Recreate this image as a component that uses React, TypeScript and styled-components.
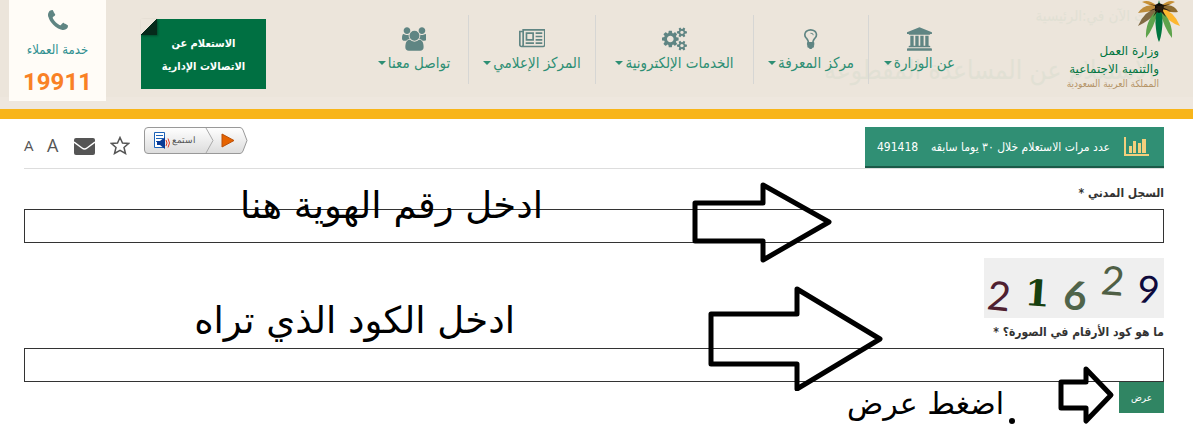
import React from 'react';
import styled, { createGlobalStyle } from 'styled-components';

const GlobalStyle = createGlobalStyle`
  * { box-sizing: border-box; }
  body {
    margin: 0;
    background: #fff;
    font-family: 'DejaVu Sans Condensed', 'DejaVu Sans', sans-serif;
    color: #333;
  }
`;

const Page = styled.div`
  direction: rtl;
  overflow: hidden;
`;

const Header = styled.header`
  position: relative;
  display: flex;
  align-items: flex-start;
  height: 119px;
  padding: 0 28px 0 9px;
  background: linear-gradient(#ece5db 97px, #eee7de 97px);
  border-bottom: 10px solid #f8b51a;
`;

const Ghost = styled.span<{ $top: number; $right: number; $size: number }>`
  position: absolute;
  top: ${(p) => p.$top}px;
  right: ${(p) => p.$right}px;
  font-size: ${(p) => p.$size}px;
  line-height: 32px;
  color: #e1e0d4;
  white-space: nowrap;
`;

const Brand = styled.a`
  position: relative;
  display: flex;
  flex-direction: column;
  width: 195px;
  padding: 42px 6px 0 0;
  color: #00753f;
  text-decoration: none;
  white-space: nowrap;
`;

const BrandName = styled.span`
  font-family: 'DejaVu Sans', sans-serif;
  font-size: 12px;
  line-height: 18px;
`;

const BrandCountry = styled.span`
  font-size: 10px;
  line-height: 12px;
  color: #b59468;
`;

const Palm = styled.svg`
  position: absolute;
  top: 0;
  right: -16px;
  width: 44px;
  height: 43px;
`;

const Nav = styled.nav`
  position: relative;
  display: flex;
  padding-top: 15px;
`;

const NavItem = styled.a<{ $width: number }>`
  display: flex;
  flex-direction: column;
  align-items: center;
  width: ${(p) => p.$width}px;
  height: 69px;
  padding-top: 10px;
  color: #2e8f74;
  font-size: 15px;
  line-height: 20px;
  text-decoration: none;
  white-space: nowrap;
  & + & { border-right: 1px solid #d6d6d4; }
`;

const NavIcon = styled.svg`
  height: 28px;
  fill: #5f8583;
`;

const NavLabel = styled.span`
  display: flex;
  align-items: center;
  gap: 2px;
`;

const Caret = styled.i`
  border: 4px solid transparent;
  border-top-color: #2e8f74;
  border-bottom: 0;
`;

const HeaderEnd = styled.div`
  display: flex;
  gap: 35px;
  margin-right: auto;
`;

const Inquiry = styled.a`
  position: relative;
  width: 125px;
  height: 70px;
  margin-top: 19px;
  padding-top: 13px;
  background: #007042;
  color: #fff;
  font-size: 11px;
  font-weight: 700;
  line-height: 23px;
  text-align: center;
  text-decoration: none;
  &::before {
    content: '';
    position: absolute;
    top: 0;
    left: 0;
    width: 16px;
    height: 16px;
    background: linear-gradient(135deg, #ece5db 50%, #062a1b 50%);
    box-shadow: 1px 1px 2px #0005;
  }
`;

const Support = styled.a`
  display: flex;
  flex-direction: column;
  align-items: center;
  gap: 10px;
  width: 97px;
  height: 101px;
  padding-top: 10px;
  background: #fffcf7;
  color: #2e8f90;
  font-size: 13px;
  line-height: 20px;
  text-decoration: none;
`;

const SupportNumber = styled.strong`
  color: #f98125;
  font-family: Roboto, sans-serif;
  font-size: 24px;
  line-height: 24px;
`;

const Main = styled.main`
  padding: 0 29px 0 24px;
`;

const Toolbar = styled.div`
  display: flex;
  justify-content: space-between;
  height: 50px;
  padding-top: 8px;
  border-bottom: 1px solid #ddd;
`;

const Stats = styled.div`
  display: flex;
  align-items: center;
  width: 299px;
  height: 41px;
  padding: 0 15px 0 12px;
  background: #308f74;
  border-bottom: 2px solid #1b5a48;
  color: #fff;
  font-size: 12px;
  white-space: nowrap;
`;

const StatsText = styled.span`
  margin-right: 14px;
`;

const StatsValue = styled.span`
  margin-right: auto;
`;

const Tools = styled.div`
  display: flex;
  direction: ltr;
  align-items: flex-start;
`;

const Tool = styled.button<{ $width: number; $size?: number }>`
  display: flex;
  align-items: flex-end;
  width: ${(p) => p.$width}px;
  height: 28px;
  padding: 0;
  border: 0;
  background: none;
  color: #555;
  font-family: 'Open Sans', sans-serif;
  font-size: ${(p) => p.$size ?? 16}px;
  line-height: 20px;
`;

const Listen = styled.button`
  width: 104px;
  height: 27px;
  padding: 0;
  border: 0;
  background: none;
`;

const Form = styled.form`
  display: flex;
  flex-direction: column;
  align-items: flex-start;
`;

const Field = styled.div<{ $gap: number }>`
  position: relative;
  width: 100%;
  padding-top: ${(p) => p.$gap}px;
`;

const Label = styled.label`
  display: block;
  height: 26px;
  font-size: 12px;
  font-weight: 700;
  line-height: 20px;
`;

const Input = styled.input`
  display: block;
  width: 100%;
  height: 34px;
  padding: 0 12px;
  border: 1px solid #333;
  border-radius: 0;
  background: #fff;
  font-size: 14px;
`;

const Captcha = styled.svg`
  display: block;
  width: 180px;
  height: 60px;
  margin-bottom: 4px;
  background: #efefef;
`;

const Submit = styled.button`
  width: 45px;
  height: 31px;
  padding: 0;
  border: 0;
  background: #308563;
  color: #fff;
  font-family: inherit;
  font-size: 10px;
`;

const Actions = styled.div`
  position: relative;
  width: 100%;
  height: 44px;
`;

const Note = styled.span<{ $top: number; $right: number; $size: number }>`
  position: absolute;
  top: ${(p) => p.$top}px;
  right: ${(p) => p.$right}px;
  color: #000;
  font-family: 'DejaVu Sans', sans-serif;
  font-size: ${(p) => p.$size}px;
  line-height: 48px;
  white-space: nowrap;
  pointer-events: none;
`;

const Dot = styled.i`
  position: absolute;
  top: 36px;
  right: 149px;
  width: 6px;
  height: 6px;
  border-radius: 50%;
  background: #000;
`;

const Arrow = styled.svg<{ $top: number; $right: number }>`
  position: absolute;
  top: ${(p) => p.$top}px;
  right: ${(p) => p.$right}px;
  fill: none;
  stroke: #000;
  stroke-width: 5;
  stroke-linejoin: round;
  pointer-events: none;
`;

const navItems = [
  {
    label: 'عن الوزارة', width: 101, box: 1920,
    path: 'M960 0l960 384v128h-128q0 26-20.5 45t-48.5 19h-1526q-28 0-48.5-19t-20.5-45h-128v-128zm-704 640h256v768h128v-768h256v768h128v-768h256v768h128v-768h256v768h59q28 0 48.5 19t20.5 45v64h-1664v-64q0-26 20.5-45t48.5-19h59v-768zm1595 960q28 0 48.5 19t20.5 45v128h-1920v-128q0-26 20.5-45t48.5-19h1782z',
  },
  {
    label: 'مركز المعرفة', width: 115, box: 1024,
    path: 'M736 576q0 13-9.5 22.5t-22.5 9.5-22.5-9.5-9.5-22.5q0-46-54-71t-106-25q-13 0-22.5-9.5t-9.5-22.5 9.5-22.5 22.5-9.5q50 0 99.5 16t87 54 37.5 90zm160 0q0-72-34.5-134t-90-101.5-123-62-136.5-22.5-136.5 22.5-123 62-90 101.5-34.5 134q0 101 68 180 10 11 30.5 33t30.5 33q128 153 141 298h228q13-145 141-298 10-11 30.5-33t30.5-33q68-79 68-180zm128 0q0 155-103 268-45 49-74.5 87t-59.5 95.5-34 107.5q47 28 47 82 0 37-25 64 25 27 25 64 0 52-45 81 13 23 13 47 0 46-31.5 71t-77.5 25q-20 44-60 70t-87 26-87-26-60-70q-46 0-77.5-25t-31.5-71q0-24 13-47-45-29-45-81 0-37 25-64-25-27-25-64 0-54 47-82-4-50-34-107.5t-59.5-95.5-74.5-87q-103-113-103-268 0-99 44.5-184.5t117-142 164-89 186.5-32.5 186.5 32.5 164 89 117 142 44.5 184.5z',
  },
  {
    label: 'الخدمات الإلكترونية', width: 158, box: 1920,
    path: 'M896 896q0-106-75-181t-181-75-181 75-75 181 75 181 181 75 181-75 75-181zm768 512q0-52-38-90t-90-38-90 38-38 90q0 53 37.5 90.5t90.5 37.5 90.5-37.5 37.5-90.5zm0-1024q0-52-38-90t-90-38-90 38-38 90q0 53 37.5 90.5t90.5 37.5 90.5-37.5 37.5-90.5zm-384 421v185q0 10-7 19.5t-16 10.5l-155 24q-11 35-32 76 34 48 90 115 7 11 7 20 0 12-7 19-23 30-82.5 89.5t-78.5 59.5q-11 0-21-7l-115-90q-37 19-77 31-11 108-23 155-7 24-30 24h-186q-11 0-20-7.5t-10-17.5l-23-153q-34-10-75-31l-118 89q-7 7-20 7-11 0-21-8-144-133-144-160 0-9 7-19 10-14 41-53t47-61q-23-44-35-82l-152-24q-10-1-17-9.5t-7-19.5v-185q0-10 7-19.5t16-10.5l155-24q11-35 32-76-34-48-90-115-7-11-7-20 0-12 7-20 22-30 82-89t79-59q11 0 21 7l115 90q34-18 77-32 11-108 23-154 7-24 30-24h186q11 0 20 7.5t10 17.5l23 153q34 10 75 31l118-89q8-7 20-7 11 0 21 8 144 133 144 160 0 8-7 19-12 16-42 54t-45 60q23 48 34 82l152 23q10 2 17 10.5t7 19.5zm640 533v140q0 16-149 31-12 27-30 52 51 113 51 138 0 4-4 7-122 71-124 71-8 0-46-47t-52-68q-20 2-30 2t-30-2q-14 21-52 68t-46 47q-2 0-124-71-4-3-4-7 0-25 51-138-18-25-30-52-149-15-149-31v-140q0-16 149-31 13-29 30-52-51-113-51-138 0-4 4-7 4-2 35-20t59-34 30-16q8 0 46 46.5t52 67.5q20-2 30-2t30 2q51-71 92-112l6-2q4 0 124 70 4 3 4 7 0 25-51 138 17 23 30 52 149 15 149 31zm0-1024v140q0 16-149 31-12 27-30 52 51 113 51 138 0 4-4 7-122 71-124 71-8 0-46-47t-52-68q-20 2-30 2t-30-2q-14 21-52 68t-46 47q-2 0-124-71-4-3-4-7 0-25 51-138-18-25-30-52-149-15-149-31v-140q0-16 149-31 13-29 30-52-51-113-51-138 0-4 4-7 4-2 35-20t59-34 30-16q8 0 46 46.5t52 67.5q20-2 30-2t30 2q51-71 92-112l6-2q4 0 124 70 4 3 4 7 0 25-51 138 17 23 30 52 149 15 149 31z',
  },
  {
    label: 'المركز الإعلامي', width: 127, box: 2048,
    path: 'M1024 512h-384v384h384v-384zm128 640v128h-640v-128h640zm0-768v640h-640v-640h640zm640 768v128h-512v-128h512zm0-256v128h-512v-128h512zm0-256v128h-512v-128h512zm0-256v128h-512v-128h512zm-1536 960v-960h-128v960q0 26 19 45t45 19 45-19 19-45zm1664 0v-1088h-1536v1088q0 33-11 64h1483q26 0 45-19t19-45zm128-1216v1216q0 80-56 136t-136 56h-1664q-80 0-136-56t-56-136v-1088h256v-128h1792z',
  },
  {
    label: 'تواصل معنا', width: 109, box: 1920,
    path: 'M593 896q-162 5-265 128h-134q-82 0-138-40.5t-56-118.5q0-353 124-353 6 0 43.5 21t97.5 42.5 119 21.5q67 0 133-23-5 37-5 66 0 139 81 256zm1071 637q0 120-73 189.5t-194 69.5h-874q-121 0-194-69.5t-73-189.5q0-53 3.5-103.5t14-109 26.5-108.5 43-97.5 62-81 85.5-53.5 111.5-20q10 0 43 21.5t73 48 107 48 135 21.5 135-21.5 107-48 73-48 43-21.5q61 0 111.5 20t85.5 53.5 62 81 43 97.5 26.5 108.5 14 109 3.5 103.5zm-1024-1277q0 106-75 181t-181 75-181-75-75-181 75-181 181-75 181 75 75 181zm704 384q0 159-112.5 271.5t-271.5 112.5-271.5-112.5-112.5-271.5 112.5-271.5 271.5-112.5 271.5 112.5 112.5 271.5zm576 225q0 78-56 118.5t-138 40.5h-134q-103-123-265-128 81-117 81-256 0-29-5-66 66 23 133 23 59 0 119-21.5t97.5-42.5 43.5-21q124 0 124 353zm-128-609q0 106-75 181t-181 75-181-75-75-181 75-181 181-75 181 75 75 181z',
  },
];

const phonePath =
  'M1408 1240q0 27-10 70.5t-21 68.5q-21 50-122 106-94 51-186 51-27 0-53-3.5t-57.5-12.5-47-14.5-55.5-20.5-49-18q-98-35-175-83-127-79-264-216t-216-264q-48-77-83-175-3-9-18-49t-20.5-55.5-14.5-47-12.5-57.5-3.5-53q0-92 51-186 56-101 106-122 25-11 68.5-21t70.5-10q14 0 21 3 18 6 53 76 11 19 30 54t35 63.5 31 53.5q3 4 17.5 25t21.5 35.5 7 28.5q0 20-28.5 50t-62 55-62 53-28.5 46q0 9 5 22.5t8.5 20.5 14 24 11.5 19q76 137 174 235t235 174q2 1 19 11.5t24 14 20.5 8.5 22.5 5q18 0 46-28.5t53-62 55-62 50-28.5q14 0 28.5 7t35.5 21.5 25 17.5q25 15 53.5 31t63.5 35 54 30q70 35 76 53 3 7 3 21z';

const digits = [
  { char: '2', x: 2, y: 51, turn: 6, size: 40, fill: '#4f2030', font: 'Lato', weight: 400 },
  { char: '1', x: 40, y: 47, turn: 4, size: 36, fill: '#17400f', font: 'DejaVu Serif', weight: 700 },
  { char: '6', x: 78, y: 50, turn: 8, size: 40, fill: '#50644a', font: 'Lato', weight: 700 },
  { char: '2', x: 116, y: 36, turn: 5, size: 40, fill: '#4f5f45', font: 'Lato', weight: 400 },
  { char: '9', x: 152, y: 44, turn: 6, size: 38, fill: '#0e0a3c', font: 'Lato', weight: 400 },
];

export default function App() {
  return (
    <Page lang="ar">
      <GlobalStyle />
      <Header>
        <Ghost $top={0} $right={38} $size={15}>أنت الآن في:الرئيسية</Ghost>
        <Ghost $top={54} $right={38} $size={26}>الاستعلام عن المساعدة المقطوعة</Ghost>
        <Brand href="#home">
          <Palm viewBox="0 0 44 43">
            <path d="M20 6Q12-1 5 2Q11 4 20 9Z M24 6Q32-1 38 2Q33 4 24 9Z" fill="#c69035" />
            <path d="M20 7Q8 2 1 13Q10 12 21 10Z" fill="#bd8c3b" />
            <path d="M24 7Q36 2 41 12Q33 13 23 10Z" fill="#8f6d32" />
            <path d="M20 8Q7 11 1 26Q12 21 21 11Z" fill="#816a43" />
            <path d="M24 8Q37 11 43 26Q31 22 23 11Z" fill="#fdb72f" />
            <path d="M20 10Q8 21 9 38Q17 28 21 11Z M24 10Q36 21 35 38Q27 28 23 11Z" fill="#5ea34c" />
            <path d="M22 0Q17 18 19 29Q20 38 22 42Q24 38 25 29Q27 18 22 0Z" fill="#00753f" />
            <path d="M18 5L22 3L27 5L26 11L22 13L18 11Z" fill="#0b0c08" />
            <path d="M12 4L21 7L12 11L20 9L16 17L22 10L29 17L25 9L34 11L25 7L34 4L22 6Z" fill="#271a0c" />
          </Palm>
          <BrandName>وزارة العمل</BrandName>
          <BrandName>والتنمية الاجتماعية</BrandName>
          <BrandCountry>المملكة العربية السعودية</BrandCountry>
        </Brand>
        <Nav>
          {navItems.map((item) => (
            <NavItem key={item.label} href="#menu" $width={item.width}>
              <NavIcon width={item.box / 77} viewBox={`0 -100 ${item.box} 1992`}>
                <path d={item.path} />
              </NavIcon>
              <NavLabel>{item.label}<Caret /></NavLabel>
            </NavItem>
          ))}
        </Nav>
        <HeaderEnd>
          <Inquiry href="#inquiry">الاستعلام عن<br />الاتصالات الإدارية</Inquiry>
          <Support href="tel:19911">
            <svg width="20" height="20" viewBox="0 128 1408 1408" fill="#5f8583"><path d={phonePath} /></svg>
            <span>خدمة العملاء</span>
            <SupportNumber>19911</SupportNumber>
          </Support>
        </HeaderEnd>
      </Header>
      <Main>
        <Toolbar>
          <Stats>
            <svg width="25" height="20" viewBox="0 0 25 20" fill="#f3cf7d">
              <path d="M0 0h2v17h23v2H0z M5 9h3v7H5z M9 4h3v12H9z M14 6h3v10h-3z M18 2h4v14h-4z" />
            </svg>
            <StatsText>عدد مرات الاستعلام خلال ٣٠ يوما سابقه</StatsText>
            <StatsValue>491418</StatsValue>
          </Stats>
          <Tools>
            <Tool $width={23} $size={15}>A</Tool>
            <Tool $width={27} $size={18}>A</Tool>
            <Tool $width={36} aria-label="بريد">
              <svg width="21" height="17" viewBox="0 0 21 17">
                <rect width="21" height="17" rx="2" fill="#555" />
                <path d="M0 4L8 10Q10.500 12 13 10L21 4" fill="none" stroke="#fff" strokeWidth="1.500" />
              </svg>
            </Tool>
            <Tool $width={34} aria-label="المفضلة">
              <svg width="20" height="19" viewBox="0 0 20 19" fill="none" stroke="#555" strokeWidth="1.500">
                <path d="M10 1.500L12.500 7L18.500 7.500L14 11.500L15.500 17.500L10 14.300L4.500 17.500L6 11.500L1.500 7.500L7.500 7Z" />
              </svg>
            </Tool>
            <Listen type="button">
              <svg width="104" height="27" viewBox="0 0 104 27">
                <defs>
                  <linearGradient id="listen" x2="0" y2="1">
                    <stop stopColor="#fff" /><stop offset="1" stopColor="#dcdcdc" />
                  </linearGradient>
                </defs>
                <path d="M4 .5H96Q98 .5 99 3L103 13.500L99 24Q98 26.500 96 26.500H4Q.5 26.500 .5 23V4Q.5 .5 4 .5Z" fill="url(#listen)" stroke="#999" />
                <path d="M62 1L69 13.500L62 26" fill="none" stroke="#aaa" />
                <path d="M78 7L90 13.500L78 20Z" fill="#e66300" stroke="#b95009" />
                <path d="M10.500 5.500H20.500V20.500H10.500Z" fill="#fff" stroke="#1b62b8" />
                <path d="M12 8.500H19M12 11.500H19M12 14.500H16" stroke="#1b62b8" />
                <path d="M13 14H16L21 10V22L16 18H13Z" fill="#083a96" />
                <path d="M22 13Q24 16 22 19M24 11.500Q27 16 24 20.500" fill="none" stroke="#e23a28" />
                <text x="52" y="16" fontSize="9" fill="#555" textAnchor="start" direction="rtl">استمع</text>
              </svg>
            </Listen>
          </Tools>
        </Toolbar>
        <Form>
          <Field $gap={14}>
            <Label htmlFor="civil">السجل المدني *</Label>
            <Input id="civil" />
            <Note $top={13} $right={621} $size={37}>ادخل رقم الهوية هنا</Note>
            <Arrow $top={13} $right={331} width="142" height="82" viewBox="0 0 142 82">
              <path d="M4 21H72V3L138 40L72 78V59H4Z" />
            </Arrow>
          </Field>
          <Field $gap={15}>
            <Captcha role="img" aria-label="21629" viewBox="0 0 180 60" direction="ltr">
              {digits.map((d) => (
                <text
                  key={d.x}
                  x={d.x}
                  y={d.y}
                  fontSize={d.size}
                  fontFamily={d.font}
                  fontWeight={d.weight}
                  fill={d.fill}
                  transform={`rotate(${d.turn} ${d.x} ${d.y})`}
                >
                  {d.char}
                </text>
              ))}
            </Captcha>
            <Label htmlFor="code">ما هو كود الأرقام في الصورة؟ *</Label>
            <Input id="code" />
            <Note $top={54} $right={649} $size={37}>ادخل الكود الذي تراه</Note>
            <Arrow $top={42} $right={280} width="177" height="106" viewBox="0 0 177 106">
              <path d="M4 29H90V4L173 54L90 104V79H4Z" />
            </Arrow>
          </Field>
          <Actions>
            <Submit type="submit">عرض</Submit>
            <Note $top={-2} $right={160} $size={30}>اضغط عرض</Note>
            <Dot />
            <Arrow $top={-17} $right={49} width="58" height="60" viewBox="0 0 58 60">
              <path d="M4 17H29V4L54 30L29 56V43H4Z" />
            </Arrow>
          </Actions>
        </Form>
      </Main>
    </Page>
  );
}
